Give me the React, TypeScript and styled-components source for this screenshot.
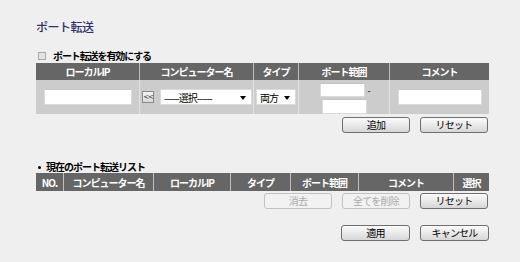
import React from "react";
import styled, { createGlobalStyle } from "styled-components";

const GlobalStyle = createGlobalStyle`
  html, body {
    margin: 0;
    padding: 0;
    background: #efefef;
  }
  body {
    font-family: "Noto Sans CJK JP", "Noto Sans", sans-serif;
    font-size: 10px;
    color: #000;
  }
`;

const Page = styled.div`
  width: 453px;
  padding: 20px 0 0 36px;
`;

const Title = styled.h1`
  margin: 0;
  font-size: 12px;
  line-height: 14px;
  font-weight: 500;
  color: #2f2f6b;
  letter-spacing: -0.5px;
`;

const CheckRow = styled.label`
  display: flex;
  align-items: center;
  gap: 7px;
  height: 12px;
  margin: 16px 0 1px 2px;
  font-weight: bold;
  letter-spacing: -1.1px;
  line-height: 12px;
`;

const Box = styled.span`
  width: 6px;
  height: 6px;
  border: 1px solid #a8a8a8;
  background: #e4e4e4;
`;

const Grid = styled.div<{ $cols: string; $h: number }>`
  display: grid;
  grid-template-columns: ${(p) => p.$cols};
  height: ${(p) => p.$h}px;
`;

const HeadCell = styled.div`
  display: flex;
  align-items: center;
  justify-content: center;
  background: #666666;
  color: #fff;
  font-weight: bold;
  letter-spacing: -1px;
  & + & {
    border-left: 1px solid #bdbdbd;
  }
`;

const BodyCell = styled.div<{ $align?: string }>`
  display: flex;
  align-items: center;
  justify-content: ${(p) => p.$align || "center"};
  background: #cccccc;
  & + & {
    border-left: 1px solid #e2e2e2;
  }
`;

const TextBox = styled.input<{ $w: number; $h?: number }>`
  box-sizing: border-box;
  width: ${(p) => p.$w}px;
  height: ${(p) => p.$h || 16}px;
  margin: 0;
  padding: 0 2px;
  border: 1px solid #dadada;
  border-top-color: #c4c4c4;
  background: #fff;
  outline: none;
`;

const PortCol = styled.div`
  display: flex;
  flex-direction: column;
  align-items: center;
  gap: 2px;
  padding: 3px 0 0 0;
  align-self: stretch;
  justify-content: flex-start;
`;

const PortLine = styled.div<{ $shift: number }>`
  display: flex;
  align-items: center;
  gap: 2px;
  margin-left: ${(p) => p.$shift}px;
  font-size: 9px;
`;

const CopyBtn = styled.button`
  box-sizing: border-box;
  width: 12px;
  height: 12px;
  margin: 0 6px 0 2px;
  padding: 0;
  border: 1px solid #8a8a8a;
  background: linear-gradient(#f4f4f4, #d8d8d8);
  font-family: "DejaVu Sans", sans-serif;
  font-size: 7px;
  line-height: 9px;
  letter-spacing: -1px;
  color: #333;
`;

const SelectWrap = styled.div<{ $w: number }>`
  position: relative;
  box-sizing: border-box;
  width: ${(p) => p.$w}px;
  height: 16px;
  background: #fff;
  border: 1px solid #dadada;
  display: flex;
  align-items: center;
  padding-left: 3px;
  font-size: 10px;
  letter-spacing: -1px;
`;

const Arrow = styled.svg`
  position: absolute;
  right: 5px;
  top: 6px;
`;

const ButtonRow = styled.div<{ $top: number }>`
  display: flex;
  justify-content: flex-end;
  gap: 10px;
  margin-top: ${(p) => p.$top}px;
  padding-right: ${(p) => (p.$top > 10 ? 0 : 1)}px;
`;

const Btn = styled.button<{ $w?: number }>`
  box-sizing: border-box;
  width: ${(p) => p.$w || 68}px;
  height: 16px;
  padding: 0;
  border: 1px solid #6f6f6f;
  border-radius: 3px;
  background: linear-gradient(#fafafa, #e6e6e6 60%, #d6d6d6);
  font-family: inherit;
  font-size: 10px;
  letter-spacing: -0.8px;
  line-height: 14px;
  color: #000;
  &:disabled {
    border-color: #c2c2c2;
    background: #f2f2f2;
    color: #ababab;
  }
`;

const ListTitle = styled.div`
  display: flex;
  align-items: center;
  gap: 5px;
  height: 12px;
  line-height: 12px;
  margin: 28px 0 0 2px;
  font-weight: bold;
  letter-spacing: -1px;
`;

const Dot = styled.span`
  width: 3px;
  height: 3px;
  border-radius: 50%;
  background: #000;
`;

const addCols = "103px 114px 45px 91px 100px";
const listCols = "27px 90px 77px 60px 68px 95px 36px";
const listHeads = ["NO.", "コンピューター名", "ローカルIP", "タイプ", "ポート範囲", "コメント", "選択"];

function DropDown({ w, label }: { w: number; label: string }) {
  return (
    <SelectWrap $w={w}>
      {label}
      <Arrow width="6" height="4" viewBox="0 0 6 4">
        <path d="M0 0h6L3 4z" fill="#000" />
      </Arrow>
    </SelectWrap>
  );
}

export default function App() {
  return (
    <>
      <GlobalStyle />
      <Page>
        <Title>ポート転送</Title>
        <CheckRow>
          <Box />
          ポート転送を有効にする
        </CheckRow>

        <Grid $cols={addCols} $h={17}>
          <HeadCell>ローカルIP</HeadCell>
          <HeadCell>コンピューター名</HeadCell>
          <HeadCell>タイプ</HeadCell>
          <HeadCell>ポート範囲</HeadCell>
          <HeadCell>コメント</HeadCell>
        </Grid>
        <Grid $cols={addCols} $h={34}>
          <BodyCell>
            <TextBox $w={88} $h={16} />
          </BodyCell>
          <BodyCell $align="flex-start">
            <CopyBtn>&lt;&lt;</CopyBtn>
            <DropDown w={92} label="------選択------" />
          </BodyCell>
          <BodyCell>
            <DropDown w={40} label="両方" />
          </BodyCell>
          <BodyCell>
            <PortCol>
              <PortLine $shift={3}>
                <TextBox $w={45} $h={14} />-
              </PortLine>
              <PortLine $shift={0}>
                <TextBox $w={45} $h={15} />
              </PortLine>
            </PortCol>
          </BodyCell>
          <BodyCell>
            <TextBox $w={84} $h={16} />
          </BodyCell>
        </Grid>
        <ButtonRow $top={3}>
          <Btn>追加</Btn>
          <Btn>リセット</Btn>
        </ButtonRow>

        <ListTitle>
          <Dot />
          現在のポート転送リスト
        </ListTitle>
        <Grid $cols={listCols} $h={18}>
          {listHeads.map((h) => (
            <HeadCell key={h}>{h}</HeadCell>
          ))}
        </Grid>
        <ButtonRow $top={2}>
          <Btn disabled>消去</Btn>
          <Btn disabled>全てを削除</Btn>
          <Btn>リセット</Btn>
        </ButtonRow>
        <ButtonRow $top={16}>
          <Btn $w={69}>適用</Btn>
          <Btn $w={69}>キャンセル</Btn>
        </ButtonRow>
      </Page>
    </>
  );
}
